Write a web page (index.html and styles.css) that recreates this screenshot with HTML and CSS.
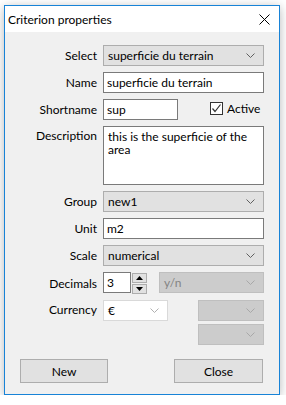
FILE: index.html
```html
<!DOCTYPE html>
<html lang="en">
<head>
    <meta charset="UTF-8">
    <title>Criterion properties</title>
    <link rel="stylesheet" href="styles.css">
</head>
<body>
    <div class="window">
        <div class="titlebar">
            <span class="title">Criterion properties</span>
            <svg class="close-icon" width="11" height="11" viewBox="0 0 11 11">
                <path d="M0.5 0.5 L10.5 10.5 M10.5 0.5 L0.5 10.5" stroke="#000" stroke-width="1" fill="none"/>
            </svg>
        </div>
        <div class="content">
            <div class="form">
                <label>Select</label>
                <div class="combo">
                    <span>superficie du terrain</span>
                    <svg class="chevron" width="9" height="5" viewBox="0 0 9 5"><path d="M0.5 0.5 L4.5 4.5 L8.5 0.5" stroke="#606060" fill="none"/></svg>
                </div>

                <label>Name</label>
                <input type="text" class="field" value="superficie du terrain">

                <label>Shortname</label>
                <div class="short-row">
                    <input type="text" class="field short" value="sup">
                    <span class="check">
                        <span class="check-box">
                            <svg width="11" height="11" viewBox="0 0 11 11"><path d="M1.5 5.5 L4 8.5 L9.5 1.5" stroke="#333" stroke-width="1.2" fill="none"/></svg>
                        </span>
                        Active
                    </span>
                </div>

                <label class="top">Description</label>
                <textarea class="field area">this is the superficie of the area</textarea>

                <label>Group</label>
                <div class="combo">
                    <span>new1</span>
                    <svg class="chevron" width="9" height="5" viewBox="0 0 9 5"><path d="M0.5 0.5 L4.5 4.5 L8.5 0.5" stroke="#606060" fill="none"/></svg>
                </div>

                <label>Unit</label>
                <input type="text" class="field" value="m2">

                <label>Scale</label>
                <div class="combo">
                    <span>numerical</span>
                    <svg class="chevron" width="9" height="5" viewBox="0 0 9 5"><path d="M0.5 0.5 L4.5 4.5 L8.5 0.5" stroke="#606060" fill="none"/></svg>
                </div>

                <label>Decimals</label>
                <div class="dec-row">
                    <input type="text" class="field spin-input" value="3">
                    <div class="spinner">
                        <span class="spin-btn"><svg width="7" height="4" viewBox="0 0 7 4"><path d="M0 4 L3.5 0 L7 4 Z" fill="#000"/></svg></span>
                        <span class="spin-btn"><svg width="7" height="4" viewBox="0 0 7 4"><path d="M0 0 L3.5 4 L7 0 Z" fill="#000"/></svg></span>
                    </div>
                    <div class="combo disabled yn">
                        <span>y/n</span>
                        <svg class="chevron" width="9" height="5" viewBox="0 0 9 5"><path d="M0.5 0.5 L4.5 4.5 L8.5 0.5" stroke="#a8a8a8" fill="none"/></svg>
                    </div>
                </div>

                <label class="top">Currency</label>
                <div class="cur-row">
                    <div class="combo light cur">
                        <span>€</span>
                        <svg class="chevron" width="9" height="5" viewBox="0 0 9 5"><path d="M0.5 0.5 L4.5 4.5 L8.5 0.5" stroke="#b0b0b0" fill="none"/></svg>
                    </div>
                    <div class="cur-extra">
                        <div class="combo disabled">
                            <span></span>
                            <svg class="chevron" width="9" height="5" viewBox="0 0 9 5"><path d="M0.5 0.5 L4.5 4.5 L8.5 0.5" stroke="#a8a8a8" fill="none"/></svg>
                        </div>
                        <div class="combo disabled">
                            <span></span>
                            <svg class="chevron" width="9" height="5" viewBox="0 0 9 5"><path d="M0.5 0.5 L4.5 4.5 L8.5 0.5" stroke="#a8a8a8" fill="none"/></svg>
                        </div>
                    </div>
                </div>
            </div>
            <div class="buttons">
                <button class="btn new">New</button>
                <button class="btn close">Close</button>
            </div>
        </div>
    </div>
</body>
</html>
```

FILE: styles.css
```css
body {
    margin: 0;
    padding: 0;
    background: #fff;
    font-family: Lato, "Noto Sans", sans-serif;
    font-size: 12px;
    color: #000;
}
.window {
    margin: 5px 0 0 4px;
    width: 274px;
    height: 388px;
    border: 1px solid #1883d7;
    background: #f0f0f0;
    box-shadow: 0 2px 10px rgba(0,0,0,0.28);
}
.titlebar {
    height: 26px;
    background: #fff;
    display: flex;
    align-items: center;
    justify-content: space-between;
    padding: 0 9px 0 3px;
}
.title {
    font-size: 12px;
}
.content {
    padding: 13px 0 0 0;
}
.form {
    display: grid;
    grid-template-columns: 92px 161px;
    column-gap: 6px;
    row-gap: 6px;
    align-items: center;
}
label {
    text-align: right;
    line-height: 21px;
}
label.top {
    align-self: start;
    line-height: 20px;
}
.combo {
    box-sizing: border-box;
    height: 21px;
    border: 1px solid #adadad;
    background: #e1e1e1;
    display: flex;
    align-items: center;
    justify-content: space-between;
    padding: 0 8px 0 4px;
}
.combo.disabled {
    background: #cccccc;
    border-color: #bfbfbf;
    color: #838383;
}
.combo.light {
    background: #fff;
    border-color: #d9d9d9;
}
.field {
    box-sizing: border-box;
    height: 21px;
    border: 1px solid #7a7a7a;
    background: #fff;
    font-family: inherit;
    font-size: 12px;
    padding: 0 3px;
    margin: 0;
    outline: none;
    width: 100%;
}
.field.area {
    height: 59px;
    resize: none;
    padding: 3px 4px;
    line-height: 13px;
}
.short-row {
    display: flex;
    align-items: center;
}
.field.short {
    width: 75px;
}
.check {
    display: flex;
    align-items: center;
    margin-left: 32px;
    gap: 4px;
    margin-top: -3px;
}
.check-box {
    box-sizing: border-box;
    width: 13px;
    height: 13px;
    border: 1px solid #333;
    background: #fff;
    display: flex;
    align-items: center;
    justify-content: center;
}
.dec-row {
    display: flex;
    align-items: flex-start;
}
.field.spin-input {
    width: 28px;
}
.spinner {
    display: flex;
    flex-direction: column;
    gap: 1px;
    margin: 1px 0 0 1px;
}
.spin-btn {
    box-sizing: border-box;
    width: 15px;
    height: 10px;
    border: 1px solid #adadad;
    background: #e1e1e1;
    display: flex;
    align-items: center;
    justify-content: center;
}
.combo.yn {
    width: 106px;
    margin-left: 12px;
}
.cur-row {
    display: flex;
    justify-content: space-between;
    align-items: flex-start;
}
.combo.cur {
    width: 65px;
}
.cur-extra {
    width: 66px;
    display: flex;
    flex-direction: column;
    gap: 3px;
}
.buttons {
    display: flex;
    justify-content: space-between;
    padding: 0 16px 0 15px;
    margin-top: 14px;
}
.btn {
    box-sizing: border-box;
    height: 24px;
    border: 1px solid #adadad;
    background: #e1e1e1;
    font-family: inherit;
    font-size: 12px;
    color: #000;
    padding: 0;
}
.btn.new {
    width: 88px;
}
.btn.close {
    width: 89px;
}
```
